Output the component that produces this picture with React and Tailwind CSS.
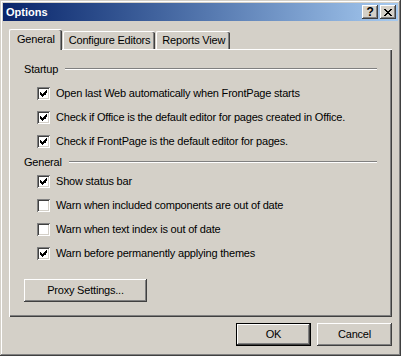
import { useState } from "react";

const FONT = "font-['Tahoma','Liberation_Sans',sans-serif]";

const raised =
  "shadow-[inset_-1px_-1px_#404040,inset_1px_1px_#ffffff,inset_-2px_-2px_#808080,inset_2px_2px_#d4d0c8]";

const CheckMark = () => (
  <svg width="7" height="7" viewBox="0 0 7 7" shapeRendering="crispEdges" className="block">
    <path
      d="M6 0h1v3h-1zM5 1h1v4h-1zM4 2h1v3h-1zM3 3h1v3h-1zM2 4h1v3h-1zM1 3h1v3h-1zM0 2h1v3h-1z"
      fill="#000"
    />
  </svg>
);

const Checkbox = ({ checked, label, onToggle }) => (
  <div className="flex h-[24px] items-center pl-[27px]" onClick={onToggle}>
    <div className="flex h-[13px] w-[13px] shrink-0 items-center justify-center bg-white shadow-[inset_1px_1px_#808080,inset_-1px_-1px_#ffffff,inset_2px_2px_#404040,inset_-2px_-2px_#d4d0c8]">
      {checked && <CheckMark />}
    </div>
    <span className="ml-[6px] whitespace-nowrap">{label}</span>
  </div>
);

const GroupHeader = ({ title }) => (
  <div className="flex h-[14px] items-center pl-[14px] pr-[15px]">
    <span className="whitespace-nowrap">{title}</span>
    <div className="ml-[7px] flex-1">
      <div className="h-px bg-[#808080]" />
      <div className="h-px bg-white" />
    </div>
  </div>
);

const Button = ({ children, isDefault, className = "" }) => (
  <button
    className={`flex h-[23px] items-center justify-center bg-[#d4d0c8] ${
      isDefault
        ? "shadow-[inset_0_0_0_1px_#000000,inset_-2px_-2px_#404040,inset_2px_2px_#ffffff,inset_-3px_-3px_#808080]"
        : raised
    } ${className}`}
  >
    {children}
  </button>
);

const Tab = ({ label, active }) => (
  <div
    className={`flex items-center justify-center rounded-t-[2px] border-l border-t border-white bg-[#d4d0c8] shadow-[inset_-1px_0_#404040,inset_-2px_0_#808080] ${
      active ? "relative z-10 -mb-px h-[21px] px-[7px] pb-[2px]" : "ml-px h-[18px] px-[5px]"
    }`}
  >
    {label}
  </div>
);

export default function App() {
  const [opts, setOpts] = useState({
    openLast: true,
    office: true,
    frontpage: true,
    status: true,
    included: false,
    textIndex: false,
    themes: true,
  });
  const toggle = (k) => setOpts((o) => ({ ...o, [k]: !o[k] }));

  return (
    <div
      className={`${FONT} flex h-[356px] w-[401px] flex-col bg-[#d4d0c8] p-[3px] text-[11px] leading-[13px] tracking-[-0.2px] text-black shadow-[inset_-1px_-1px_#404040,inset_1px_1px_#d4d0c8,inset_-2px_-2px_#808080,inset_2px_2px_#ffffff]`}
    >
      <div className="flex h-[18px] items-center bg-gradient-to-r from-[#0a246a] to-[#a6caf0] pl-[3px] pr-[2px]">
        <span className="flex-1 font-bold tracking-normal text-white">Options</span>
        <div className="flex gap-[2px]">
          <div className={`flex h-[14px] w-[16px] items-center justify-center bg-[#d4d0c8] text-[12px] font-bold ${raised}`}>
            ?
          </div>
          <div className={`flex h-[14px] w-[16px] items-center justify-center bg-[#d4d0c8] ${raised}`}>
            <svg width="8" height="7" viewBox="0 0 8 7" shapeRendering="crispEdges">
              <path
                d="M0 0h2v1h-2zM6 0h2v1h-2zM1 1h2v1h-2zM5 1h2v1h-2zM2 2h4v1h-4zM3 3h2v1h-2zM2 4h4v1h-4zM1 5h2v1h-2zM5 5h2v1h-2zM0 6h2v1h-2zM6 6h2v1h-2z"
                fill="#000"
              />
            </svg>
          </div>
        </div>
      </div>

      <div className="mt-[8px] flex flex-col px-[6px]">
        <div className="flex h-[20px] items-end">
          <Tab label="General" active />
          <Tab label="Configure Editors" />
          <Tab label="Reports View" />
        </div>
        <div className="flex h-[268px] flex-col border-l border-t border-white bg-[#d4d0c8] pt-[12px] shadow-[inset_-1px_-1px_#404040,inset_-2px_-2px_#808080]">
          <GroupHeader title="Startup" />
          <div className="mt-[5px]">
            <Checkbox checked={opts.openLast} onToggle={() => toggle("openLast")} label="Open last Web automatically when FrontPage starts" />
            <Checkbox checked={opts.office} onToggle={() => toggle("office")} label="Check if Office is the default editor for pages created in Office." />
            <Checkbox checked={opts.frontpage} onToggle={() => toggle("frontpage")} label="Check if FrontPage is the default editor for pages." />
          </div>
          <div className="mt-[2px]">
            <GroupHeader title="General" />
          </div>
          <div>
            <Checkbox checked={opts.status} onToggle={() => toggle("status")} label="Show status bar" />
            <Checkbox checked={opts.included} onToggle={() => toggle("included")} label="Warn when included components are out of date" />
            <Checkbox checked={opts.textIndex} onToggle={() => toggle("textIndex")} label="Warn when text index is out of date" />
            <Checkbox checked={opts.themes} onToggle={() => toggle("themes")} label="Warn before permanently applying themes" />
          </div>
          <div className="mt-[14px] pl-[14px]">
            <Button className="w-[123px]">Proxy Settings...</Button>
          </div>
        </div>
        <div className="mt-[6px] flex justify-end gap-[6px]">
          <Button isDefault className="w-[75px]">OK</Button>
          <Button className="w-[75px]">Cancel</Button>
        </div>
      </div>
    </div>
  );
}
